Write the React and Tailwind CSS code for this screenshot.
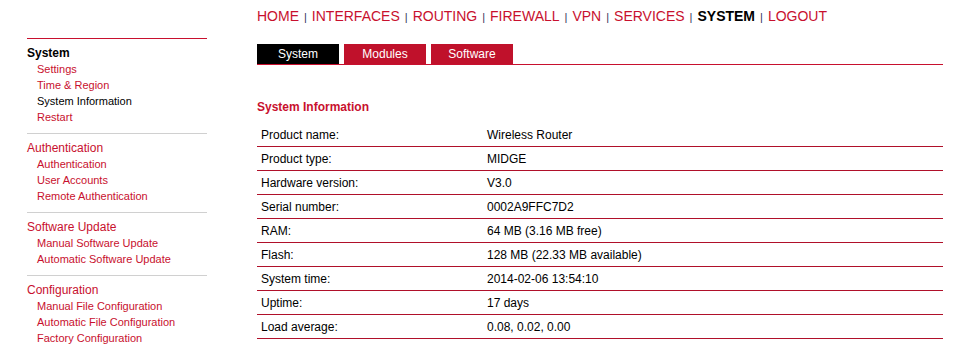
import React from "react";

const nav = ["HOME", "INTERFACES", "ROUTING", "FIREWALL", "VPN", "SERVICES", "SYSTEM", "LOGOUT"];

const sections = [
  { title: "System", active: true, items: ["Settings", "Time & Region", "System Information", "Restart"] },
  { title: "Authentication", items: ["Authentication", "User Accounts", "Remote Authentication"] },
  { title: "Software Update", items: ["Manual Software Update", "Automatic Software Update"] },
  { title: "Configuration", items: ["Manual File Configuration", "Automatic File Configuration", "Factory Configuration"] },
];

const rows = [
  ["Product name:", "Wireless Router"],
  ["Product type:", "MIDGE"],
  ["Hardware version:", "V3.0"],
  ["Serial number:", "0002A9FFC7D2"],
  ["RAM:", "64 MB (3.16 MB free)"],
  ["Flash:", "128 MB (22.33 MB available)"],
  ["System time:", "2014-02-06 13:54:10"],
  ["Uptime:", "17 days"],
  ["Load average:", "0.08, 0.02, 0.00"],
];

export default function App() {
  return (
    <div className="flex w-[966px] h-[353px] overflow-hidden bg-white text-black" style={{ fontFamily: '"Liberation Sans", Arial, sans-serif' }}>
      <aside className="ml-[27px] w-[180px] pt-[38px] shrink-0">
        {sections.map((s, i) => (
          <div
            key={s.title}
            className={
              (i === 0 ? "border-t border-t-[#c8102e] " : "") +
              (i < sections.length - 1 ? "border-b border-b-[#d0d0d0] " : "") +
              "pt-[6px] pb-[8px]"
            }
          >
            <div className={"text-[12px] leading-[16px] " + (s.active ? "font-bold text-black" : "text-[#c8102e]")}>{s.title}</div>
            {s.items.map((it) => (
              <div key={it} className={"pl-[10px] text-[11px] leading-[16px] " + (it === "System Information" ? "text-black" : "text-[#c8102e]")}>
                {it}
              </div>
            ))}
          </div>
        ))}
      </aside>
      <main className="ml-[50px] w-[686px] shrink-0">
        <nav className="h-[30px] flex items-center pt-[2px] text-[14px] whitespace-nowrap">
          {nav.map((n, i) => (
            <React.Fragment key={n}>
              {i > 0 && <span className="mx-[5px] text-[11px] text-[#33335a] relative top-[1px]">|</span>}
              <span className={n === "SYSTEM" ? "font-bold text-black" : "text-[#c8102e]"}>{n}</span>
            </React.Fragment>
          ))}
        </nav>
        <div className="mt-[14px] flex gap-[5px] border-b border-[#c8102e]">
          {["System", "Modules", "Software"].map((t, i) => (
            <div
              key={t}
              className={"w-[82px] h-[20px] flex items-center justify-center text-[12px] text-white " + (i === 0 ? "bg-black" : "bg-[#c0112b]")}
            >
              {t}
            </div>
          ))}
        </div>
        <div className="mt-[34px] mb-[8px] text-[12px] leading-[16px] font-bold text-[#c8102e]">System Information</div>
        <div>
          {rows.map(([k, v]) => (
            <div key={k} className="flex h-[24px] items-center border-b border-[#b0102a] text-[12px]">
              <div className="w-[230px] pl-[4px]">{k}</div>
              <div>{v}</div>
            </div>
          ))}
        </div>
      </main>
    </div>
  );
}
